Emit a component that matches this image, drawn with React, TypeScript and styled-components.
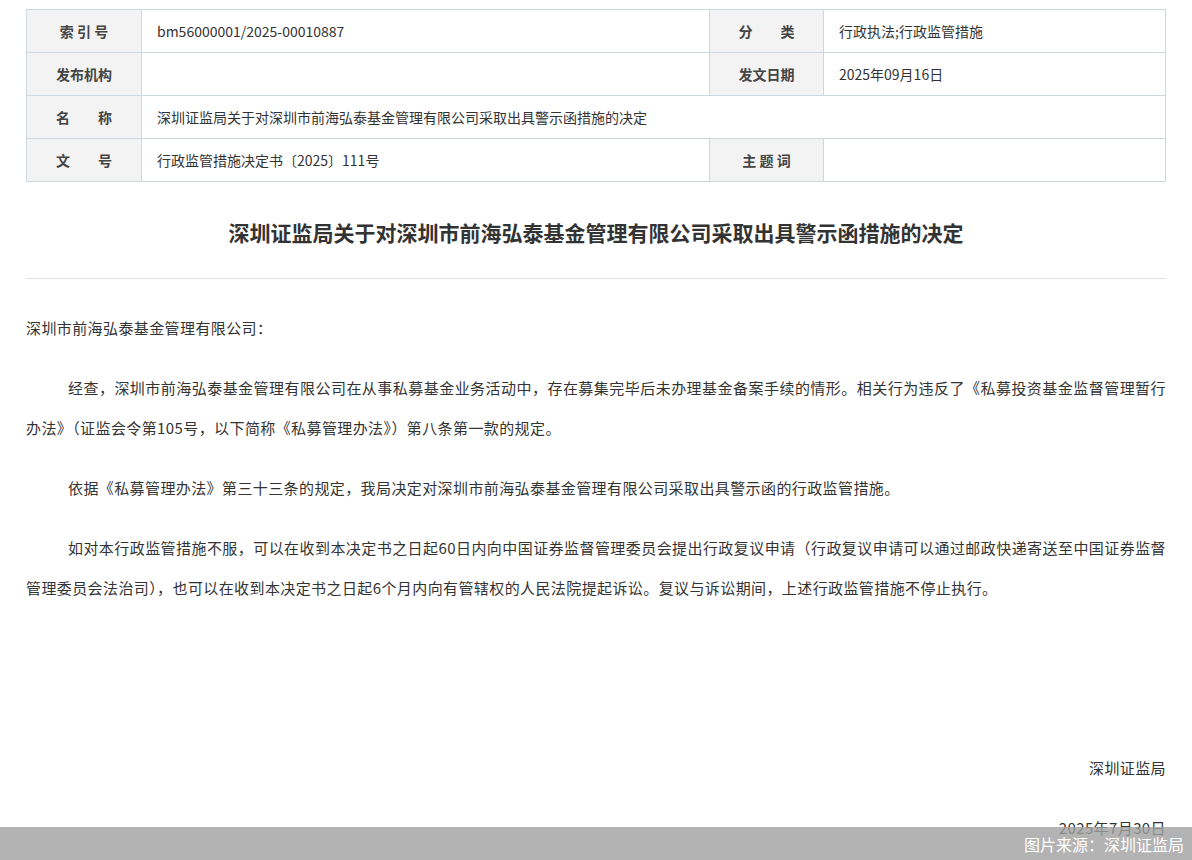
import React from "react";
import styled, { createGlobalStyle } from "styled-components";

const Global = createGlobalStyle`
  html, body { margin: 0; padding: 0; background: #fff; }
  body { font-family: "Microsoft YaHei", "Noto Sans CJK SC", sans-serif; color: #333; }
`;

const Page = styled.div`
  width: 1192px; height: 860px; position: relative; overflow: hidden;
  padding: 9px 26px 0 26px; box-sizing: border-box;
`;
const Table = styled.table`
  width: 1139px; border-collapse: collapse; table-layout: fixed;
  td { border: 1px solid #cfd6e0; height: 42px; font-size: 14px; color: #333; padding: 0; }
`;
const Label = styled.td`
  background: #f3f3f3; text-align: center; font-weight: bold; color: #444 !important;
`;
const Value = styled.td`
  padding-left: 15px !important; color: #333;
`;
const Title = styled.h1`
  margin: 36px 0 0; text-align: center; font-size: 21px; font-weight: bold; color: #333;
  line-height: 28px; padding-bottom: 32px; border-bottom: 1px solid #e2e2e2;
`;
const Body = styled.div`
  padding-top: 29px; font-size: 15px; line-height: 40px; color: #333; letter-spacing: 0.4px;
`;
const P = styled.p<{ $indent?: boolean; $right?: boolean }>`
  margin: 0 0 20px; text-indent: ${p => (p.$indent ? "2.8em" : "0")};
  text-align: ${p => (p.$right ? "right" : "justify")};
`;
const Spacer = styled.div` height: 120px; `;
const Footer = styled.div`
  position: absolute; left: 0; right: 0; bottom: 0; height: 33px;
  background: rgba(160,160,160,0.8); color: #fff; font-size: 16px;
  display: flex; align-items: center; justify-content: flex-end; padding-right: 8px;
`;

export default function App() {
  return (
    <Page>
      <Global />
      <Table>
        <colgroup>
          <col style={{ width: 115 }} /><col style={{ width: 568 }} />
          <col style={{ width: 114 }} /><col style={{ width: 342 }} />
        </colgroup>
        <tbody>
          <tr><Label>索 引 号</Label><Value>bm56000001/2025-00010887</Value><Label>分　　类</Label><Value>行政执法;行政监管措施</Value></tr>
          <tr><Label>发布机构</Label><Value></Value><Label>发文日期</Label><Value>2025年09月16日</Value></tr>
          <tr><Label>名　　称</Label><Value colSpan={3}>深圳证监局关于对深圳市前海弘泰基金管理有限公司采取出具警示函措施的决定</Value></tr>
          <tr><Label>文　　号</Label><Value>行政监管措施决定书〔2025〕111号</Value><Label>主 题 词</Label><Value></Value></tr>
        </tbody>
      </Table>
      <Title>深圳证监局关于对深圳市前海弘泰基金管理有限公司采取出具警示函措施的决定</Title>
      <Body>
        <P>深圳市前海弘泰基金管理有限公司：</P>
        <P $indent>经查，深圳市前海弘泰基金管理有限公司在从事私募基金业务活动中，存在募集完毕后未办理基金备案手续的情形。相关行为违反了《私募投资基金监督管理暂行办法》（证监会令第105号，以下简称《私募管理办法》）第八条第一款的规定。</P>
        <P $indent>依据《私募管理办法》第三十三条的规定，我局决定对深圳市前海弘泰基金管理有限公司采取出具警示函的行政监管措施。</P>
        <P $indent>如对本行政监管措施不服，可以在收到本决定书之日起60日内向中国证券监督管理委员会提出行政复议申请（行政复议申请可以通过邮政快递寄送至中国证券监督管理委员会法治司），也可以在收到本决定书之日起6个月内向有管辖权的人民法院提起诉讼。复议与诉讼期间，上述行政监管措施不停止执行。</P>
        <Spacer />
        <P $right>深圳证监局</P>
        <P $right>2025年7月30日</P>
      </Body>
      <Footer>图片来源：深圳证监局</Footer>
    </Page>
  );
}
